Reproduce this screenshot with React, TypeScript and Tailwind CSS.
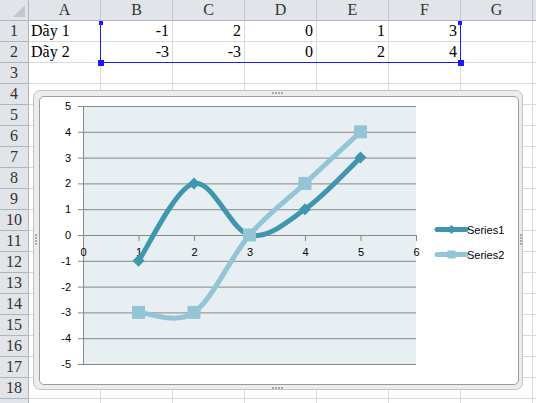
import React from 'react';

const COLS = ['A', 'B', 'C', 'D', 'E', 'F', 'G', ''];
const DATA: Record<number, string[]> = {
  1: ['Dãy 1', '-1', '2', '0', '1', '3'],
  2: ['Dãy 2', '-3', '-3', '0', '2', '4'],
};

const S1 = [-1, 2, 0, 1, 3];
const S2 = [-3, -3, 0, 2, 4];
const C1 = '#3f96ae';
const C2 = '#93c5d7';

// plot area in page coordinates
const PL = 82;
const PR = 415;
const PT = 105;
const PB = 363;
const px = (x: number) => PL + (x * (PR - PL)) / 6;
const py = (y: number) => PT + ((5 - y) * (PB - PT)) / 10;

function smoothPath(vals: number[]) {
  const pts = vals.map((v, i) => [px(i + 1), py(v)]);
  let d = `M${pts[0][0]},${pts[0][1]}`;
  for (let i = 0; i < pts.length - 1; i++) {
    const p0 = pts[i - 1] ?? pts[i];
    const p1 = pts[i];
    const p2 = pts[i + 1];
    const p3 = pts[i + 2] ?? pts[i + 1];
    const c1x = p1[0] + (p2[0] - p0[0]) / 6;
    const c1y = p1[1] + (p2[1] - p0[1]) / 6;
    const c2x = p2[0] - (p3[0] - p1[0]) / 6;
    const c2y = p2[1] - (p3[1] - p1[1]) / 6;
    d += ` C${c1x},${c1y} ${c2x},${c2y} ${p2[0]},${p2[1]}`;
  }
  return d;
}

function Diamond({ x, y, r }: { x: number; y: number; r: number }) {
  return <polygon points={`${x},${y - r} ${x + r},${y} ${x},${y + r} ${x - r},${y}`} fill={C1} />;
}

const FONT = "'Liberation Sans', Arial, sans-serif";

function Chart() {
  const yTicks = [5, 4, 3, 2, 1, 0, -1, -2, -3, -4, -5];
  const xTicks = [0, 1, 2, 3, 4, 5, 6];
  return (
    <svg className="absolute left-0 top-0" width={490} height={300} viewBox="33 90 490 300">
      <rect x={PL} y={PT} width={PR - PL} height={PB - PT} fill="#e8eff3" />
      {yTicks.map((v) => (
        <g key={v}>
          <line x1={PL - 5} x2={PR} y1={py(v) + 0.5} y2={py(v) + 0.5} stroke="#878787" strokeWidth={1} />
          <text x={70} y={py(v) + 4} textAnchor="end" fontSize={11} fontFamily={FONT} fill="#000">
            {v}
          </text>
        </g>
      ))}
      <line x1={PL + 0.5} x2={PL + 0.5} y1={PT} y2={PB + 1} stroke="#878787" strokeWidth={1} />
      {xTicks.map((v) => (
        <g key={v}>
          <line x1={px(v) + 0.5} x2={px(v) + 0.5} y1={py(0)} y2={py(0) + 6} stroke="#878787" strokeWidth={1} />
          <text x={px(v) + 0.5} y={py(0) + 21} textAnchor="middle" fontSize={11} fontFamily={FONT} fill="#000">
            {v}
          </text>
        </g>
      ))}

      <path d={smoothPath(S1)} fill="none" stroke={C1} strokeWidth={5} strokeLinecap="round" />
      {S1.map((v, i) => (
        <Diamond key={i} x={px(i + 1)} y={py(v)} r={6} />
      ))}
      <path d={smoothPath(S2)} fill="none" stroke={C2} strokeWidth={5} strokeLinecap="round" />
      {S2.map((v, i) => (
        <rect key={i} x={px(i + 1) - 6.5} y={py(v) - 6.5} width={13} height={13} fill={C2} />
      ))}

      {/* legend */}
      <line x1={436} x2={465} y1={228.5} y2={228.5} stroke={C1} strokeWidth={5} strokeLinecap="round" />
      <Diamond x={450.5} y={228.5} r={4.5} />
      <text x={466} y={232.5} fontSize={11} fontFamily={FONT} fill="#000">
        Series1
      </text>
      <line x1={436} x2={465} y1={253.5} y2={253.5} stroke={C2} strokeWidth={5} strokeLinecap="round" />
      <rect x={446.5} y={249.5} width={8} height={8} fill={C2} />
      <text x={466} y={257.5} fontSize={11} fontFamily={FONT} fill="#000">
        Series2
      </text>
    </svg>
  );
}

function Dots({ vertical }: { vertical?: boolean }) {
  return (
    <div className={vertical ? 'flex flex-col gap-[1px]' : 'flex gap-[1px]'}>
      {[0, 1, 2, 3].map((i) => (
        <div key={i} className="w-[2px] h-[2px] bg-[#a9a9a9]" />
      ))}
    </div>
  );
}

export default function App() {
  const rows = Array.from({ length: 19 }, (_, i) => i + 1);
  return (
    <div className="relative w-[536px] h-[403px] overflow-hidden bg-white font-['Liberation_Serif','Times_New_Roman',serif] text-[16px] text-black">
      {/* column headers */}
      <div className="flex h-[21px] border-b border-[#b1b5ba] bg-[#e1e4e8]">
        <div className="relative w-[29px] shrink-0 border-r border-[#b1b5ba]">
          <svg className="absolute right-[3px] bottom-[3px]" width={12} height={12}>
            <polygon points="12,0 12,12 0,12" fill="#c3c7cc" />
          </svg>
        </div>
        {COLS.map((c, i) => (
          <div
            key={i}
            className="w-[72px] shrink-0 border-r border-[#c5c9ce] flex items-center justify-center text-[#333] leading-none"
          >
            {c}
          </div>
        ))}
      </div>

      {rows.map((r) => (
        <div key={r} className="flex h-[21px]">
          <div className="w-[29px] shrink-0 border-r border-b border-[#b1b5ba] bg-[#e1e4e8] flex items-center justify-center text-[#333] leading-none">
            {r < 19 ? r : ''}
          </div>
          {COLS.map((c, ci) => {
            const val = DATA[r]?.[ci];
            return (
              <div
                key={ci}
                className={`w-[72px] shrink-0 border-r border-b border-[#d9d9d9] flex items-center leading-none ${
                  ci === 0 ? 'justify-start pl-[2px]' : 'justify-end pr-[3px]'
                }`}
              >
                {val}
              </div>
            );
          })}
        </div>
      ))}

      {/* data range selection */}
      <div className="absolute left-[100px] top-[22px] w-[361px] h-[41px] border-l border-r border-b border-[#1a1aff]" />
      <div className="absolute left-[99px] top-[21px] w-[4px] h-[4px] bg-[#1a1aff]" />
      <div className="absolute left-[458px] top-[21px] w-[4px] h-[4px] bg-[#1a1aff]" />
      <div className="absolute left-[98px] top-[60px] w-[6px] h-[6px] bg-[#1a1aff]" />
      <div className="absolute left-[458px] top-[60px] w-[6px] h-[6px] bg-[#1a1aff]" />

      {/* chart object */}
      <div className="absolute left-[33px] top-[90px] w-[490px] h-[300px] rounded-[7px] border border-[#c4c4c4] bg-[#ececec] pl-[5px] pt-[5px] pr-[3px] pb-[4px]">
        <div className="w-full h-full rounded-[5px] border border-[#9c9c9c] bg-white" />
        <Chart />
        <div className="absolute left-[238px] top-[1px]">
          <Dots />
        </div>
        <div className="absolute left-[238px] bottom-[0px]">
          <Dots />
        </div>
        <div className="absolute left-[1px] top-[143px]">
          <Dots vertical />
        </div>
        <div className="absolute right-[0px] top-[143px]">
          <Dots vertical />
        </div>
      </div>
    </div>
  );
}
